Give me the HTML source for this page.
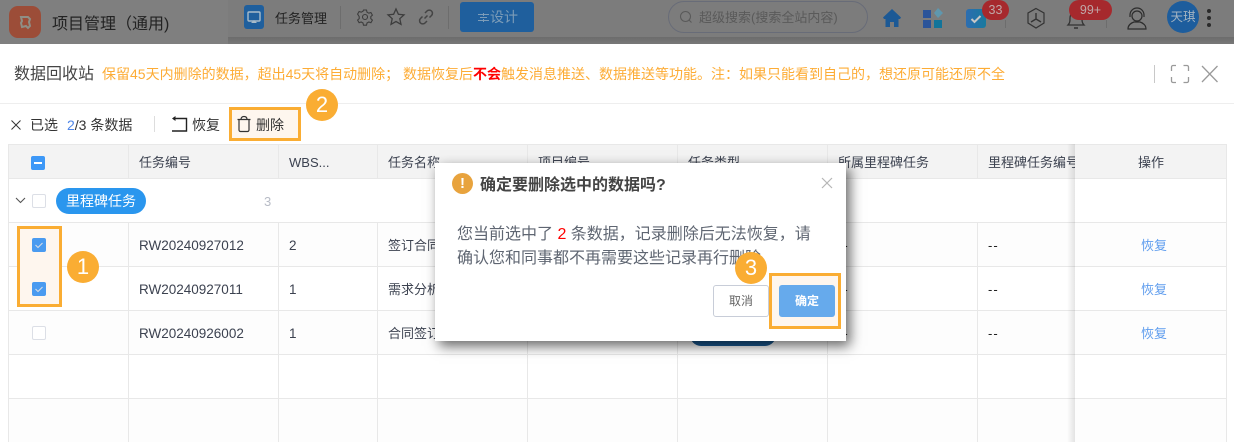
<!DOCTYPE html>
<html><head><meta charset="utf-8">
<style>
*{box-sizing:border-box}
html,body{margin:0;padding:0;width:1234px;height:442px;overflow:hidden;background:#fff;font-family:"Liberation Sans","Noto Sans CJK SC",sans-serif;color:#333}
.a{position:absolute;white-space:nowrap}
.v{position:absolute;width:1px;background:#e8e8e8}
.h{position:absolute;height:1px;background:#e8e8e8}
.t{position:absolute;font-size:13px;line-height:18px;color:#3c4250;white-space:nowrap}
.n{font-size:13.5px}
.d{color:#222;letter-spacing:1px}
.cb{position:absolute;width:14px;height:14px;border:1px solid #dcdfe6;border-radius:2px;background:#fff}
.cbc{position:absolute;width:14px;height:14px;border-radius:2px;background:#4a9bf0}
.op{position:absolute;font-size:13px;line-height:18px;color:#5f9dee;left:1141px}
.or{position:absolute;border:3px solid #faad33;background:#fef6ee}
.num{position:absolute;width:32px;height:32px;border-radius:50%;background:#faad33;color:#fff;font-size:22px;line-height:32px;text-align:center}
</style></head><body>

<!-- top bar -->
<div class="a" style="left:0;top:0;width:1234px;height:44px;background:#7f7f7f"></div>
<div class="a" style="left:228px;top:0;width:1006px;height:37px;background:#7c7c7c"></div>
<div class="a" style="left:228px;top:37px;width:1006px;height:7px;background:linear-gradient(#6c6c6c,#787878)"></div>
<div class="a" style="left:9px;top:6px;width:32px;height:32px;border-radius:9px;background:#9c4d38"></div>
<svg class="a" style="left:16px;top:14px" width="18" height="17" viewBox="0 0 18 17"><path d="M5 3h7l2 2-1 3 1 4-2 2-2-2-4 1-1-4 1-2z" fill="none" stroke="#8f8f86" stroke-width="2"/></svg>
<div class="a" style="left:52px;top:14px;font-size:16px;line-height:22px;color:#222">项目管理（通用)</div>

<div class="a" style="left:244px;top:5px;width:20px;height:24px;border-radius:3px;background:#1f5f9d"></div>
<svg class="a" style="left:244px;top:5px" width="20" height="24" viewBox="0 0 20 24"><rect x="4" y="7" width="12" height="9" rx="1" fill="none" stroke="#a9bcc9" stroke-width="1.4"/><path d="M7 18h6l-3-3z" fill="#a9bcc9"/></svg>
<div class="a" style="left:275px;top:10px;font-size:13px;line-height:18px;color:#222">任务管理</div>
<div class="a" style="left:340px;top:6px;width:1px;height:23px;background:#6d6d6d"></div>
<svg class="a" style="left:356px;top:8px" width="18" height="18" viewBox="0 0 18 18"><path d="M7.500 2h3l.5 2.200 1.800 1 2.100-.7 1.500 2.600-1.600 1.500v2l1.600 1.500-1.500 2.600-2.100-.7-1.800 1-.5 2.200h-3l-.5-2.200-1.800-1-2.100.7-1.500-2.600 1.600-1.500v-2L1.600 6.100l1.500-2.600 2.100.7 1.800-1z" fill="none" stroke="#3d3d3d" stroke-width="1.100"/><circle cx="9" cy="9" r="2.500" fill="none" stroke="#3d3d3d" stroke-width="1.100"/></svg>
<svg class="a" style="left:386px;top:7px" width="20" height="19" viewBox="0 0 20 19"><path d="M10 2l2.400 5.300 5.600.6-4.200 3.800 1.200 5.600L10 14.500l-5 2.800 1.200-5.600L2 7.900l5.600-.6z" fill="none" stroke="#3d3d3d" stroke-width="1.300"/></svg>
<svg class="a" style="left:417px;top:8px" width="18" height="18" viewBox="0 0 18 18"><path d="M7.500 10.500l3-3M8 5l2-2a3 3 0 0 1 4.500 4.500l-2 2M10 13l-2 2a3 3 0 0 1-4.500-4.500l2-2" fill="none" stroke="#444" stroke-width="1.500"/></svg>
<div class="a" style="left:448px;top:6px;width:1px;height:23px;background:#6d6d6d"></div>
<div class="a" style="left:460px;top:2px;width:74px;height:30px;border-radius:3px;background:#1f5f9d"></div>
<svg class="a" style="left:477px;top:12px" width="13" height="11" viewBox="0 0 13 11"><path d="M1 2.500h11M3 5.500h7M1 8.500h11M6.500 1v3M6.500 7v3" stroke="#7c9cb8" stroke-width="1" fill="none"/></svg>
<div class="a" style="left:490px;top:7px;font-size:14px;line-height:20px;color:#7c9cb8">设计</div>

<div class="a" style="left:668px;top:1px;width:200px;height:38px;height:32px;border:1px solid #686c78;border-radius:16px"></div>
<svg class="a" style="left:678px;top:9px" width="16" height="16" viewBox="0 0 16 16"><circle cx="7.500" cy="7.500" r="5" fill="none" stroke="#5a5a5a" stroke-width="1.100"/><path d="M11 11l2.500 2.500" stroke="#5a5a5a" stroke-width="1.100"/></svg>
<div class="a" style="left:699px;top:9px;font-size:13px;line-height:18px;color:#5a5a5a">超级搜索(搜索全站内容)</div>

<svg class="a" style="left:882px;top:8px" width="20" height="20" viewBox="0 0 20 20"><path d="M10 1L1 9.500l1 1.500h1.500v8h4.500v-5h4v5h4.500v-8H18l1-1.500z" fill="#1c5995"/></svg>
<svg class="a" style="left:922px;top:7px" width="22" height="22" viewBox="0 0 22 22"><rect x="1" y="3" width="8" height="8" fill="#2b5499"/><rect x="1" y="13" width="8" height="8" fill="#2b5499"/><rect x="12" y="13" width="8" height="8" fill="#12749a"/><path d="M16 1l5 5-5 5-4-5z" fill="#5f97ae"/></svg>
<div class="a" style="left:966px;top:9px;width:20px;height:19px;border-radius:3px;background:linear-gradient(90deg,#2d6db0,#197a9e)"></div>
<svg class="a" style="left:969px;top:13px" width="14" height="12" viewBox="0 0 14 12"><path d="M2.500 6l3 3 6-6" fill="none" stroke="#c7c7c7" stroke-width="2"/></svg>
<div class="a" style="left:982px;top:0;width:27px;height:20px;border-radius:10px;background:#a6292d;color:#c0a8a8;font-size:12.500px;line-height:20px;text-align:center">33</div>
<div class="a" style="left:1005px;top:20px;width:1px;height:8px;background:#6d6d6d"></div>
<svg class="a" style="left:1025px;top:7px" width="22" height="23" viewBox="0 0 22 23"><path d="M11 1.500l8 4.500v10l-8 5-8-5V6z" fill="none" stroke="#333" stroke-width="1.200"/><path d="M11 6v6M11 12l-5 3M11 12l5 3" stroke="#333" stroke-width="1.400" fill="none"/></svg>
<svg class="a" style="left:1066px;top:7px" width="20" height="24" viewBox="0 0 20 24"><path d="M2 18c2-2 2-4 2-7a6 6 0 0 1 12 0c0 3 0 5 2 7z" fill="none" stroke="#333" stroke-width="1.300"/><path d="M8 21h4" stroke="#333" stroke-width="1.500"/></svg>
<div class="a" style="left:1069px;top:0;width:43px;height:20px;border-radius:10px;background:#a6292d;color:#c0a8a8;font-size:12.500px;line-height:20px;text-align:center">99+</div>
<div class="a" style="left:1106px;top:20px;width:1px;height:8px;background:#6d6d6d"></div>
<svg class="a" style="left:1126px;top:7px" width="22" height="23" viewBox="0 0 22 23"><circle cx="11" cy="9" r="5" fill="none" stroke="#2d2d2d" stroke-width="1.200"/><path d="M4 10V8a7 7 0 0 1 14 0v2" fill="none" stroke="#2d2d2d" stroke-width="1.200"/><path d="M2 22c0-4 3-6 6-7h6c3 1 6 3 6 7z" fill="none" stroke="#2d2d2d" stroke-width="1.200"/></svg>
<div class="a" style="left:1167px;top:1px;width:32px;height:32px;border-radius:50%;background:#1d5d9d;color:#a4b4c2;font-size:12.500px;line-height:32px;text-align:center">天琪</div>
<div class="a" style="left:1207px;top:9px;width:4px;height:4px;border-radius:50%;background:#2a2a2a"></div>
<div class="a" style="left:1207px;top:16px;width:4px;height:4px;border-radius:50%;background:#2a2a2a"></div>
<div class="a" style="left:1207px;top:23px;width:4px;height:4px;border-radius:50%;background:#2a2a2a"></div>

<!-- drawer header -->
<div class="a" style="left:14px;top:64px;font-size:16px;line-height:22px;color:#444">数据回收站</div>
<div class="a" style="left:102px;top:64px;font-size:14px;line-height:20px;color:#fdac35">保留45天内删除的数据，超出45天将自动删除； 数据恢复后<b style="color:#f00">不会</b>触发消息推送、数据推送等功能。注：如果只能看到自己的，想还原可能还原不全</div>
<div class="a" style="left:1154px;top:65px;width:1px;height:18px;background:#c8c8c8"></div>
<svg class="a" style="left:1170px;top:64px" width="20" height="20" viewBox="0 0 20 20"><path d="M1.500 7V3a1.500 1.500 0 0 1 1.500-1.500h3M13.500 1.500H17A1.500 1.500 0 0 1 18.500 3v4M18.500 13v4a1.500 1.500 0 0 1-1.500 1.500h-3.500M6 18.500H3A1.500 1.500 0 0 1 1.500 17v-4" fill="none" stroke="#9a9a9a" stroke-width="1.300"/></svg>
<svg class="a" style="left:1200px;top:64px" width="20" height="20" viewBox="0 0 20 20"><path d="M2 2l15.500 16M17.500 2L2 18" stroke="#9a9a9a" stroke-width="1.300"/></svg>
<div class="h" style="left:0;top:103px;width:1234px;background:#eee"></div>

<!-- toolbar -->
<svg class="a" style="left:10px;top:119px" width="12" height="12" viewBox="0 0 12 12"><path d="M1.500 1.500l9 9M10.500 1.500l-9 9" stroke="#333" stroke-width="1"/></svg>
<div class="a" style="left:30px;top:115px;font-size:14px;line-height:20px;color:#333">已选</div>
<div class="a" style="left:67px;top:115px;font-size:14px;line-height:20px;color:#333"><span style="color:#4f86e8">2</span>/3 条数据</div>
<div class="a" style="left:154px;top:116px;width:1px;height:16px;background:#ddd"></div>
<svg class="a" style="left:170px;top:115px" width="18" height="18" viewBox="0 0 18 18"><path d="M3 3.500h13.500V16H2" fill="none" stroke="#222" stroke-width="1.400"/><path d="M5.500 1L2 3.500 5.500 6z" fill="#222"/></svg>
<div class="a" style="left:192px;top:115px;font-size:14px;line-height:20px;color:#333">恢复</div>
<div class="or" style="left:229px;top:107px;width:72px;height:34px"></div>
<svg class="a" style="left:236px;top:115px" width="16" height="18" viewBox="0 0 16 18"><path d="M1.500 4.500h13M5 4.500C5 2.500 6 1.500 8 1.500s3 1 3 3M3 4.500V15a1.500 1.500 0 0 0 1.500 1.500h7A1.500 1.500 0 0 0 13 15V4.500" fill="none" stroke="#333" stroke-width="1.200"/></svg>
<div class="a" style="left:256px;top:115px;font-size:14px;line-height:20px;color:#333">删除</div>

<!-- table -->
<div class="a" style="left:9px;top:144px;width:1218px;height:35px;background:#f3f3f3"></div>
<div class="a" style="left:9px;top:222px;width:1218px;height:220px;background:#fdfdfd"></div>
<div class="a" style="left:9px;top:266px;width:1218px;height:44px;background:#fff"></div>
<div class="a" style="left:9px;top:354px;width:1218px;height:44px;background:#fff"></div>
<div class="h" style="left:9px;top:144px;width:1218px"></div>
<div class="h" style="left:9px;top:178px;width:1218px"></div>
<div class="h" style="left:9px;top:222px;width:1218px"></div>
<div class="h" style="left:9px;top:266px;width:1218px"></div>
<div class="h" style="left:9px;top:310px;width:1218px"></div>
<div class="h" style="left:9px;top:354px;width:1218px"></div>
<div class="h" style="left:9px;top:398px;width:1218px"></div>
<div class="v" style="left:8px;top:144px;height:298px"></div>
<div class="v" style="left:128px;top:144px;height:34px"></div>
<div class="v" style="left:278px;top:144px;height:34px"></div>
<div class="v" style="left:377px;top:144px;height:34px"></div>
<div class="v" style="left:527px;top:144px;height:34px"></div>
<div class="v" style="left:677px;top:144px;height:34px"></div>
<div class="v" style="left:827px;top:144px;height:34px"></div>
<div class="v" style="left:977px;top:144px;height:34px"></div>
<div class="v" style="left:128px;top:222px;height:220px"></div>
<div class="v" style="left:278px;top:222px;height:220px"></div>
<div class="v" style="left:377px;top:222px;height:220px"></div>
<div class="v" style="left:527px;top:222px;height:220px"></div>
<div class="v" style="left:677px;top:222px;height:220px"></div>
<div class="v" style="left:827px;top:222px;height:220px"></div>
<div class="v" style="left:977px;top:222px;height:220px"></div>
<div class="v" style="left:1226px;top:144px;height:298px"></div>

<div class="t" style="left:139px;top:154px">任务编号</div>
<div class="t" style="left:289px;top:154px">WBS...</div>
<div class="t" style="left:388px;top:154px">任务名称</div>
<div class="t" style="left:538px;top:154px">项目编号</div>
<div class="t" style="left:688px;top:154px">任务类型</div>
<div class="t" style="left:838px;top:154px">所属里程碑任务</div>
<div class="a" style="left:988px;top:144px;width:87px;height:34px;overflow:hidden"><div class="t" style="left:0;top:10px">里程碑任务编号</div></div>

<div class="cbc" style="left:31px;top:156px;background:#3d98f7"></div>
<div class="a" style="left:34px;top:162px;width:8px;height:2px;background:#fff"></div>

<svg class="a" style="left:15px;top:196px" width="11" height="9" viewBox="0 0 11 9"><path d="M1 2l4.500 4.500L10 2" fill="none" stroke="#555" stroke-width="1.100"/></svg>
<div class="cb" style="left:32px;top:194px"></div>
<div class="a" style="left:56px;top:188px;width:90px;height:26px;border-radius:13px;background:#2a96ee;color:#fff;font-size:14px;line-height:26px;text-align:center">里程碑任务</div>
<div class="a" style="left:264px;top:193px;font-size:13px;line-height:18px;color:#b8bcc6">3</div>

<div class="or" style="left:17px;top:226px;width:45px;height:81px"></div>
<div class="cbc" style="left:32px;top:238px"></div>
<svg class="a" style="left:32px;top:238px" width="14" height="14" viewBox="0 0 14 14"><path d="M3.500 7l2.500 2.500 4.500-4.500" fill="none" stroke="#d6dde5" stroke-width="1.100"/></svg>
<div class="cbc" style="left:32px;top:282px"></div>
<svg class="a" style="left:32px;top:282px" width="14" height="14" viewBox="0 0 14 14"><path d="M3.500 7l2.500 2.500 4.500-4.500" fill="none" stroke="#d6dde5" stroke-width="1.100"/></svg>
<div class="cb" style="left:32px;top:326px"></div>

<div class="t n" style="left:139px;top:237px">RW20240927012</div>
<div class="t n" style="left:139px;top:281px">RW20240927011</div>
<div class="t n" style="left:139px;top:325px">RW20240926002</div>
<div class="t n" style="left:289px;top:237px">2</div>
<div class="t n" style="left:289px;top:281px">1</div>
<div class="t n" style="left:289px;top:325px">1</div>
<div class="t" style="left:388px;top:237px">签订合同</div>
<div class="t" style="left:388px;top:281px">需求分析</div>
<div class="t" style="left:388px;top:325px">合同签订</div>
<div class="t d" style="left:838px;top:237px">--</div>
<div class="t d" style="left:838px;top:281px">--</div>
<div class="t d" style="left:838px;top:325px">--</div>
<div class="t d" style="left:988px;top:237px">--</div>
<div class="t d" style="left:988px;top:281px">--</div>
<div class="t d" style="left:988px;top:325px">--</div>
<div class="a" style="left:690px;top:324px;width:86px;height:22px;border-radius:11px;background:#1a5b95"></div>

<!-- fixed column -->
<div class="a" style="left:1067px;top:144px;width:8px;height:298px;background:linear-gradient(90deg,rgba(0,0,0,0),rgba(0,0,0,.1))"></div>
<div class="a" style="left:1075px;top:145px;width:151px;height:33px;background:#f3f3f3"></div>
<div class="a" style="left:1075px;top:179px;width:151px;height:43px;background:#fff"></div>
<div class="a" style="left:1075px;top:223px;width:151px;height:43px;background:#fdfdfd"></div>
<div class="a" style="left:1075px;top:267px;width:151px;height:43px;background:#fff"></div>
<div class="a" style="left:1075px;top:311px;width:151px;height:43px;background:#fdfdfd"></div>
<div class="a" style="left:1075px;top:355px;width:151px;height:43px;background:#fff"></div>
<div class="a" style="left:1075px;top:399px;width:151px;height:43px;background:#fdfdfd"></div>
<div class="t" style="left:1138px;top:154px">操作</div>
<div class="op" style="top:237px">恢复</div>
<div class="op" style="top:281px">恢复</div>
<div class="op" style="top:325px">恢复</div>

<!-- annotation 1 & 2 -->
<div class="num" style="left:67px;top:251px">1</div>
<div class="num" style="left:306px;top:89px">2</div>

<!-- modal -->
<div class="a" style="left:435px;top:163px;width:411px;height:178px;background:#fff;box-shadow:4px 5px 12px rgba(0,0,0,.6)"></div>
<div class="a" style="left:452px;top:173px;width:21px;height:21px;border-radius:50%;background:#e8a33d;color:#fff;font-size:15px;font-weight:bold;line-height:21px;text-align:center">!</div>
<div class="a" style="left:480px;top:175px;font-size:16px;font-weight:bold;line-height:22px;color:#444">确定要删除选中的数据吗?</div>
<svg class="a" style="left:821px;top:177px" width="12" height="12" viewBox="0 0 12 12"><path d="M1 1l10 10M11 1L1 11" stroke="#b5b5b5" stroke-width="1.200"/></svg>
<div class="a" style="left:457px;top:223px;font-size:16px;line-height:24px;color:#5f6672">您当前选中了 <span style="color:#f00">2</span> 条数据，记录删除后无法恢复，请</div>
<div class="a" style="left:457px;top:247px;font-size:16px;line-height:24px;color:#5f6672">确认您和同事都不再需要这些记录再行删除</div>
<div class="a" style="left:713px;top:285px;width:56px;height:32px;border:1px solid #c8cdd8;border-radius:3px;background:#fff;color:#666;font-size:12px;line-height:30px;text-align:center">取消</div>
<div class="or" style="left:769px;top:273px;width:72px;height:56px"></div>
<div class="a" style="left:779px;top:285px;width:56px;height:32px;border-radius:3px;background:#66aaec;color:#fff;font-size:12px;font-weight:bold;line-height:32px;text-align:center">确定</div>
<div class="num" style="left:735px;top:252px">3</div>
</body></html>
